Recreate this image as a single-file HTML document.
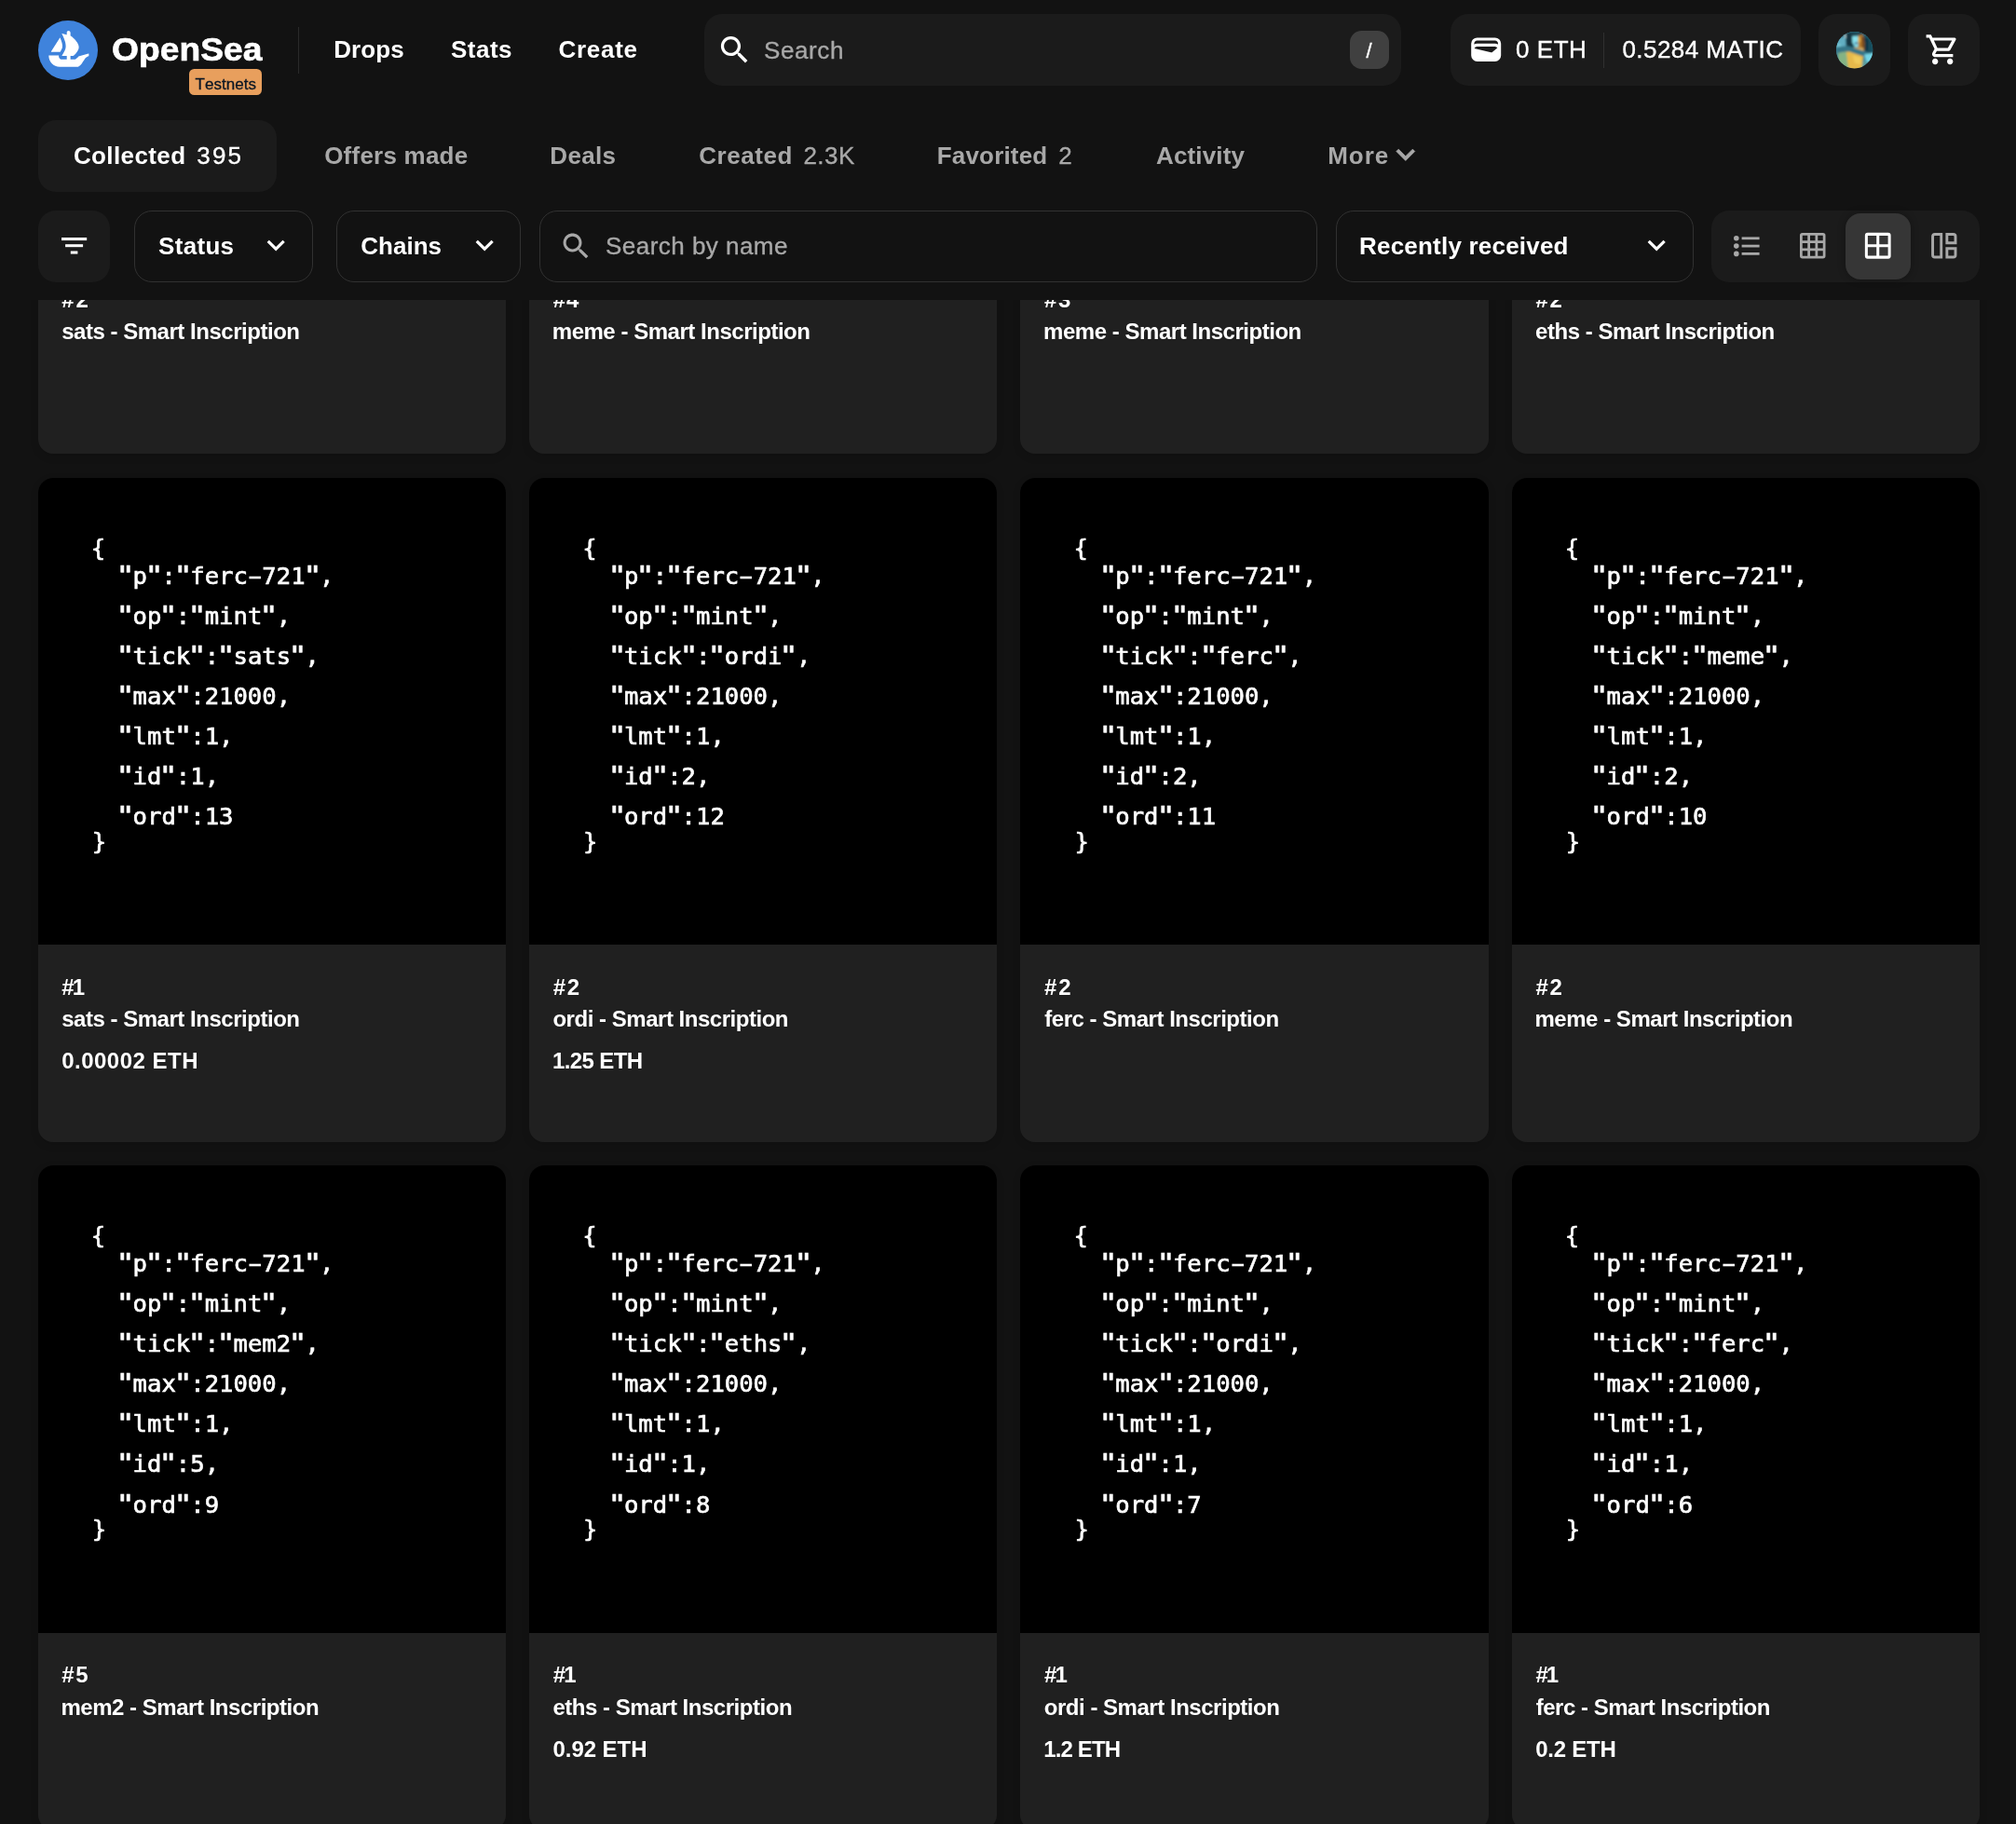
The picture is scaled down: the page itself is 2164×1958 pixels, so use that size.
<!DOCTYPE html><html lang="en"><head><meta charset="utf-8"><title>OpenSea</title><style>
*{box-sizing:border-box;margin:0;padding:0}
html,body{width:2164px;height:1958px;background:#121212;overflow:hidden}
body{position:relative;font-family:"Liberation Sans",sans-serif;font-kerning:none;font-variant-ligatures:none;-webkit-font-smoothing:antialiased}
.t{position:absolute;white-space:nowrap;line-height:1;display:block}
.ls{font-family:"Liberation Sans",sans-serif}
.mo{font-family:"DejaVu Sans Mono","Liberation Mono",monospace}
.cd{-webkit-text-stroke:0.65px #fff}
.q{display:inline-block;font-style:normal;transform-origin:50% 10.5px;transform:translate(-0.3px,-0.5px) scale(1.33,1.06)}
.hy{display:inline-block;font-style:normal;transform:scaleX(1.75)}
.b{font-weight:700}.r{font-weight:400}
.ic{position:absolute;display:block;overflow:visible}
.bx{position:absolute}
.card{position:absolute;width:501.75px;height:713px;border-radius:16px;background:#202020;overflow:hidden;box-shadow:0 3px 10px rgba(0,0,0,.12)}
.card .img{position:absolute;left:0;top:0;width:100%;height:501px;background:#000}
#root{position:absolute;left:0;top:0;width:2164px;height:1958px;overflow:hidden;will-change:transform}
#hdr{position:absolute;left:0;top:0;width:2164px;height:322px;background:#121212;z-index:5}
.fill{background:#1b1b1b}
.line{border:1.6px solid #313131}
</style></head><body>
<div id="root">
<div class="card" style="left:41px;top:-226px;width:502px"><div class="img"></div><span class="t ls b " style="left:25.34px;top:535.58px;font-size:24px;letter-spacing:1.776px;color:#fff;">#2</span><span class="t ls b " style="left:25.16px;top:569.88px;font-size:24px;letter-spacing:-0.474px;color:#fff;">sats - Smart Inscription</span></div>
<div class="card" style="left:568px;top:-226px;width:502px"><div class="img"></div><span class="t ls b " style="left:25.69px;top:535.58px;font-size:24px;letter-spacing:0.944px;color:#fff;">#4</span><span class="t ls b " style="left:24.77px;top:569.88px;font-size:24px;letter-spacing:-0.474px;color:#fff;">meme - Smart Inscription</span></div>
<div class="card" style="left:1095px;top:-226px;width:503px"><div class="img"></div><span class="t ls b " style="left:26.04px;top:535.58px;font-size:24px;letter-spacing:1.682px;color:#fff;">#3</span><span class="t ls b " style="left:25.12px;top:569.88px;font-size:24px;letter-spacing:-0.474px;color:#fff;">meme - Smart Inscription</span></div>
<div class="card" style="left:1623px;top:-226px;width:502px"><div class="img"></div><span class="t ls b " style="left:25.39px;top:535.58px;font-size:24px;letter-spacing:1.776px;color:#fff;">#2</span><span class="t ls b " style="left:25.11px;top:569.88px;font-size:24px;letter-spacing:-0.474px;color:#fff;">eths - Smart Inscription</span></div>
<div class="card" style="left:41px;top:513px;width:502px"><div class="img"></div><span class="t mo r cd" style="left:56.79px;top:63.14px;font-size:25.6px;letter-spacing:0.000px;color:#fff;">{</span><span class="t mo r cd" style="left:86.15px;top:92.74px;font-size:25.6px;letter-spacing:0.000px;color:#fff;"><i class="q">&quot;</i>p<i class="q">&quot;</i>:<i class="q">&quot;</i>ferc<i class="hy">-</i>721<i class="q">&quot;</i>,</span><span class="t mo r cd" style="left:86.15px;top:135.84px;font-size:25.6px;letter-spacing:0.000px;color:#fff;"><i class="q">&quot;</i>op<i class="q">&quot;</i>:<i class="q">&quot;</i>mint<i class="q">&quot;</i>,</span><span class="t mo r cd" style="left:86.15px;top:178.94px;font-size:25.6px;letter-spacing:0.000px;color:#fff;"><i class="q">&quot;</i>tick<i class="q">&quot;</i>:<i class="q">&quot;</i>sats<i class="q">&quot;</i>,</span><span class="t mo r cd" style="left:86.15px;top:222.04px;font-size:25.6px;letter-spacing:0.000px;color:#fff;"><i class="q">&quot;</i>max<i class="q">&quot;</i>:21000,</span><span class="t mo r cd" style="left:86.15px;top:265.14px;font-size:25.6px;letter-spacing:0.000px;color:#fff;"><i class="q">&quot;</i>lmt<i class="q">&quot;</i>:1,</span><span class="t mo r cd" style="left:86.15px;top:308.24px;font-size:25.6px;letter-spacing:0.000px;color:#fff;"><i class="q">&quot;</i>id<i class="q">&quot;</i>:1,</span><span class="t mo r cd" style="left:86.15px;top:351.34px;font-size:25.6px;letter-spacing:0.000px;color:#fff;"><i class="q">&quot;</i>ord<i class="q">&quot;</i>:13</span><span class="t mo r cd" style="left:57.69px;top:378.14px;font-size:25.6px;letter-spacing:0.000px;color:#fff;">}</span><span class="t ls b " style="left:25.34px;top:534.78px;font-size:24px;letter-spacing:-1.867px;color:#fff;">#1</span><span class="t ls b " style="left:25.16px;top:569.08px;font-size:24px;letter-spacing:-0.474px;color:#fff;">sats - Smart Inscription</span><span class="t ls b " style="left:25.15px;top:613.78px;font-size:24px;letter-spacing:0.494px;color:#fff;">0.00002 ETH</span></div>
<div class="card" style="left:568px;top:513px;width:502px"><div class="img"></div><span class="t mo r cd" style="left:57.14px;top:63.14px;font-size:25.6px;letter-spacing:0.000px;color:#fff;">{</span><span class="t mo r cd" style="left:86.50px;top:92.74px;font-size:25.6px;letter-spacing:0.000px;color:#fff;"><i class="q">&quot;</i>p<i class="q">&quot;</i>:<i class="q">&quot;</i>ferc<i class="hy">-</i>721<i class="q">&quot;</i>,</span><span class="t mo r cd" style="left:86.50px;top:135.84px;font-size:25.6px;letter-spacing:0.000px;color:#fff;"><i class="q">&quot;</i>op<i class="q">&quot;</i>:<i class="q">&quot;</i>mint<i class="q">&quot;</i>,</span><span class="t mo r cd" style="left:86.50px;top:178.94px;font-size:25.6px;letter-spacing:0.000px;color:#fff;"><i class="q">&quot;</i>tick<i class="q">&quot;</i>:<i class="q">&quot;</i>ordi<i class="q">&quot;</i>,</span><span class="t mo r cd" style="left:86.50px;top:222.04px;font-size:25.6px;letter-spacing:0.000px;color:#fff;"><i class="q">&quot;</i>max<i class="q">&quot;</i>:21000,</span><span class="t mo r cd" style="left:86.50px;top:265.14px;font-size:25.6px;letter-spacing:0.000px;color:#fff;"><i class="q">&quot;</i>lmt<i class="q">&quot;</i>:1,</span><span class="t mo r cd" style="left:86.50px;top:308.24px;font-size:25.6px;letter-spacing:0.000px;color:#fff;"><i class="q">&quot;</i>id<i class="q">&quot;</i>:2,</span><span class="t mo r cd" style="left:86.50px;top:351.34px;font-size:25.6px;letter-spacing:0.000px;color:#fff;"><i class="q">&quot;</i>ord<i class="q">&quot;</i>:12</span><span class="t mo r cd" style="left:58.04px;top:378.14px;font-size:25.6px;letter-spacing:0.000px;color:#fff;">}</span><span class="t ls b " style="left:25.69px;top:534.78px;font-size:24px;letter-spacing:1.776px;color:#fff;">#2</span><span class="t ls b " style="left:25.41px;top:569.08px;font-size:24px;letter-spacing:-0.474px;color:#fff;">ordi - Smart Inscription</span><span class="t ls b " style="left:24.94px;top:613.78px;font-size:24px;letter-spacing:-0.593px;color:#fff;">1.25 ETH</span></div>
<div class="card" style="left:1095px;top:513px;width:503px"><div class="img"></div><span class="t mo r cd" style="left:57.49px;top:63.14px;font-size:25.6px;letter-spacing:0.000px;color:#fff;">{</span><span class="t mo r cd" style="left:86.85px;top:92.74px;font-size:25.6px;letter-spacing:0.000px;color:#fff;"><i class="q">&quot;</i>p<i class="q">&quot;</i>:<i class="q">&quot;</i>ferc<i class="hy">-</i>721<i class="q">&quot;</i>,</span><span class="t mo r cd" style="left:86.85px;top:135.84px;font-size:25.6px;letter-spacing:0.000px;color:#fff;"><i class="q">&quot;</i>op<i class="q">&quot;</i>:<i class="q">&quot;</i>mint<i class="q">&quot;</i>,</span><span class="t mo r cd" style="left:86.85px;top:178.94px;font-size:25.6px;letter-spacing:0.000px;color:#fff;"><i class="q">&quot;</i>tick<i class="q">&quot;</i>:<i class="q">&quot;</i>ferc<i class="q">&quot;</i>,</span><span class="t mo r cd" style="left:86.85px;top:222.04px;font-size:25.6px;letter-spacing:0.000px;color:#fff;"><i class="q">&quot;</i>max<i class="q">&quot;</i>:21000,</span><span class="t mo r cd" style="left:86.85px;top:265.14px;font-size:25.6px;letter-spacing:0.000px;color:#fff;"><i class="q">&quot;</i>lmt<i class="q">&quot;</i>:1,</span><span class="t mo r cd" style="left:86.85px;top:308.24px;font-size:25.6px;letter-spacing:0.000px;color:#fff;"><i class="q">&quot;</i>id<i class="q">&quot;</i>:2,</span><span class="t mo r cd" style="left:86.85px;top:351.34px;font-size:25.6px;letter-spacing:0.000px;color:#fff;"><i class="q">&quot;</i>ord<i class="q">&quot;</i>:11</span><span class="t mo r cd" style="left:58.39px;top:378.14px;font-size:25.6px;letter-spacing:0.000px;color:#fff;">}</span><span class="t ls b " style="left:26.04px;top:534.78px;font-size:24px;letter-spacing:1.776px;color:#fff;">#2</span><span class="t ls b " style="left:26.29px;top:569.08px;font-size:24px;letter-spacing:-0.474px;color:#fff;">ferc - Smart Inscription</span></div>
<div class="card" style="left:1623px;top:513px;width:502px"><div class="img"></div><span class="t mo r cd" style="left:56.84px;top:63.14px;font-size:25.6px;letter-spacing:0.000px;color:#fff;">{</span><span class="t mo r cd" style="left:86.20px;top:92.74px;font-size:25.6px;letter-spacing:0.000px;color:#fff;"><i class="q">&quot;</i>p<i class="q">&quot;</i>:<i class="q">&quot;</i>ferc<i class="hy">-</i>721<i class="q">&quot;</i>,</span><span class="t mo r cd" style="left:86.20px;top:135.84px;font-size:25.6px;letter-spacing:0.000px;color:#fff;"><i class="q">&quot;</i>op<i class="q">&quot;</i>:<i class="q">&quot;</i>mint<i class="q">&quot;</i>,</span><span class="t mo r cd" style="left:86.20px;top:178.94px;font-size:25.6px;letter-spacing:0.000px;color:#fff;"><i class="q">&quot;</i>tick<i class="q">&quot;</i>:<i class="q">&quot;</i>meme<i class="q">&quot;</i>,</span><span class="t mo r cd" style="left:86.20px;top:222.04px;font-size:25.6px;letter-spacing:0.000px;color:#fff;"><i class="q">&quot;</i>max<i class="q">&quot;</i>:21000,</span><span class="t mo r cd" style="left:86.20px;top:265.14px;font-size:25.6px;letter-spacing:0.000px;color:#fff;"><i class="q">&quot;</i>lmt<i class="q">&quot;</i>:1,</span><span class="t mo r cd" style="left:86.20px;top:308.24px;font-size:25.6px;letter-spacing:0.000px;color:#fff;"><i class="q">&quot;</i>id<i class="q">&quot;</i>:2,</span><span class="t mo r cd" style="left:86.20px;top:351.34px;font-size:25.6px;letter-spacing:0.000px;color:#fff;"><i class="q">&quot;</i>ord<i class="q">&quot;</i>:10</span><span class="t mo r cd" style="left:57.74px;top:378.14px;font-size:25.6px;letter-spacing:0.000px;color:#fff;">}</span><span class="t ls b " style="left:25.39px;top:534.78px;font-size:24px;letter-spacing:1.776px;color:#fff;">#2</span><span class="t ls b " style="left:24.47px;top:569.08px;font-size:24px;letter-spacing:-0.474px;color:#fff;">meme - Smart Inscription</span></div>
<div class="card" style="left:41px;top:1251px;width:502px"><div class="img" style="height:502px"></div><span class="t mo r cd" style="left:56.79px;top:63.34px;font-size:25.6px;letter-spacing:0.000px;color:#fff;">{</span><span class="t mo r cd" style="left:86.15px;top:92.94px;font-size:25.6px;letter-spacing:0.000px;color:#fff;"><i class="q">&quot;</i>p<i class="q">&quot;</i>:<i class="q">&quot;</i>ferc<i class="hy">-</i>721<i class="q">&quot;</i>,</span><span class="t mo r cd" style="left:86.15px;top:136.04px;font-size:25.6px;letter-spacing:0.000px;color:#fff;"><i class="q">&quot;</i>op<i class="q">&quot;</i>:<i class="q">&quot;</i>mint<i class="q">&quot;</i>,</span><span class="t mo r cd" style="left:86.15px;top:179.14px;font-size:25.6px;letter-spacing:0.000px;color:#fff;"><i class="q">&quot;</i>tick<i class="q">&quot;</i>:<i class="q">&quot;</i>mem2<i class="q">&quot;</i>,</span><span class="t mo r cd" style="left:86.15px;top:222.24px;font-size:25.6px;letter-spacing:0.000px;color:#fff;"><i class="q">&quot;</i>max<i class="q">&quot;</i>:21000,</span><span class="t mo r cd" style="left:86.15px;top:265.34px;font-size:25.6px;letter-spacing:0.000px;color:#fff;"><i class="q">&quot;</i>lmt<i class="q">&quot;</i>:1,</span><span class="t mo r cd" style="left:86.15px;top:308.44px;font-size:25.6px;letter-spacing:0.000px;color:#fff;"><i class="q">&quot;</i>id<i class="q">&quot;</i>:5,</span><span class="t mo r cd" style="left:86.15px;top:351.54px;font-size:25.6px;letter-spacing:0.000px;color:#fff;"><i class="q">&quot;</i>ord<i class="q">&quot;</i>:9</span><span class="t mo r cd" style="left:57.69px;top:378.34px;font-size:25.6px;letter-spacing:0.000px;color:#fff;">}</span><span class="t ls b " style="left:25.34px;top:534.98px;font-size:24px;letter-spacing:1.483px;color:#fff;">#5</span><span class="t ls b " style="left:24.42px;top:570.38px;font-size:24px;letter-spacing:-0.474px;color:#fff;">mem2 - Smart Inscription</span></div>
<div class="card" style="left:568px;top:1251px;width:502px"><div class="img" style="height:502px"></div><span class="t mo r cd" style="left:57.14px;top:63.34px;font-size:25.6px;letter-spacing:0.000px;color:#fff;">{</span><span class="t mo r cd" style="left:86.50px;top:92.94px;font-size:25.6px;letter-spacing:0.000px;color:#fff;"><i class="q">&quot;</i>p<i class="q">&quot;</i>:<i class="q">&quot;</i>ferc<i class="hy">-</i>721<i class="q">&quot;</i>,</span><span class="t mo r cd" style="left:86.50px;top:136.04px;font-size:25.6px;letter-spacing:0.000px;color:#fff;"><i class="q">&quot;</i>op<i class="q">&quot;</i>:<i class="q">&quot;</i>mint<i class="q">&quot;</i>,</span><span class="t mo r cd" style="left:86.50px;top:179.14px;font-size:25.6px;letter-spacing:0.000px;color:#fff;"><i class="q">&quot;</i>tick<i class="q">&quot;</i>:<i class="q">&quot;</i>eths<i class="q">&quot;</i>,</span><span class="t mo r cd" style="left:86.50px;top:222.24px;font-size:25.6px;letter-spacing:0.000px;color:#fff;"><i class="q">&quot;</i>max<i class="q">&quot;</i>:21000,</span><span class="t mo r cd" style="left:86.50px;top:265.34px;font-size:25.6px;letter-spacing:0.000px;color:#fff;"><i class="q">&quot;</i>lmt<i class="q">&quot;</i>:1,</span><span class="t mo r cd" style="left:86.50px;top:308.44px;font-size:25.6px;letter-spacing:0.000px;color:#fff;"><i class="q">&quot;</i>id<i class="q">&quot;</i>:1,</span><span class="t mo r cd" style="left:86.50px;top:351.54px;font-size:25.6px;letter-spacing:0.000px;color:#fff;"><i class="q">&quot;</i>ord<i class="q">&quot;</i>:8</span><span class="t mo r cd" style="left:58.04px;top:378.34px;font-size:25.6px;letter-spacing:0.000px;color:#fff;">}</span><span class="t ls b " style="left:25.69px;top:534.98px;font-size:24px;letter-spacing:-1.867px;color:#fff;">#1</span><span class="t ls b " style="left:25.41px;top:570.38px;font-size:24px;letter-spacing:-0.474px;color:#fff;">eths - Smart Inscription</span><span class="t ls b " style="left:25.50px;top:615.08px;font-size:24px;letter-spacing:-0.059px;color:#fff;">0.92 ETH</span></div>
<div class="card" style="left:1095px;top:1251px;width:503px"><div class="img" style="height:502px"></div><span class="t mo r cd" style="left:57.49px;top:63.34px;font-size:25.6px;letter-spacing:0.000px;color:#fff;">{</span><span class="t mo r cd" style="left:86.85px;top:92.94px;font-size:25.6px;letter-spacing:0.000px;color:#fff;"><i class="q">&quot;</i>p<i class="q">&quot;</i>:<i class="q">&quot;</i>ferc<i class="hy">-</i>721<i class="q">&quot;</i>,</span><span class="t mo r cd" style="left:86.85px;top:136.04px;font-size:25.6px;letter-spacing:0.000px;color:#fff;"><i class="q">&quot;</i>op<i class="q">&quot;</i>:<i class="q">&quot;</i>mint<i class="q">&quot;</i>,</span><span class="t mo r cd" style="left:86.85px;top:179.14px;font-size:25.6px;letter-spacing:0.000px;color:#fff;"><i class="q">&quot;</i>tick<i class="q">&quot;</i>:<i class="q">&quot;</i>ordi<i class="q">&quot;</i>,</span><span class="t mo r cd" style="left:86.85px;top:222.24px;font-size:25.6px;letter-spacing:0.000px;color:#fff;"><i class="q">&quot;</i>max<i class="q">&quot;</i>:21000,</span><span class="t mo r cd" style="left:86.85px;top:265.34px;font-size:25.6px;letter-spacing:0.000px;color:#fff;"><i class="q">&quot;</i>lmt<i class="q">&quot;</i>:1,</span><span class="t mo r cd" style="left:86.85px;top:308.44px;font-size:25.6px;letter-spacing:0.000px;color:#fff;"><i class="q">&quot;</i>id<i class="q">&quot;</i>:1,</span><span class="t mo r cd" style="left:86.85px;top:351.54px;font-size:25.6px;letter-spacing:0.000px;color:#fff;"><i class="q">&quot;</i>ord<i class="q">&quot;</i>:7</span><span class="t mo r cd" style="left:58.39px;top:378.34px;font-size:25.6px;letter-spacing:0.000px;color:#fff;">}</span><span class="t ls b " style="left:26.04px;top:534.98px;font-size:24px;letter-spacing:-1.867px;color:#fff;">#1</span><span class="t ls b " style="left:25.76px;top:570.38px;font-size:24px;letter-spacing:-0.474px;color:#fff;">ordi - Smart Inscription</span><span class="t ls b " style="left:25.29px;top:615.08px;font-size:24px;letter-spacing:-0.884px;color:#fff;">1.2 ETH</span></div>
<div class="card" style="left:1623px;top:1251px;width:502px"><div class="img" style="height:502px"></div><span class="t mo r cd" style="left:56.84px;top:63.34px;font-size:25.6px;letter-spacing:0.000px;color:#fff;">{</span><span class="t mo r cd" style="left:86.20px;top:92.94px;font-size:25.6px;letter-spacing:0.000px;color:#fff;"><i class="q">&quot;</i>p<i class="q">&quot;</i>:<i class="q">&quot;</i>ferc<i class="hy">-</i>721<i class="q">&quot;</i>,</span><span class="t mo r cd" style="left:86.20px;top:136.04px;font-size:25.6px;letter-spacing:0.000px;color:#fff;"><i class="q">&quot;</i>op<i class="q">&quot;</i>:<i class="q">&quot;</i>mint<i class="q">&quot;</i>,</span><span class="t mo r cd" style="left:86.20px;top:179.14px;font-size:25.6px;letter-spacing:0.000px;color:#fff;"><i class="q">&quot;</i>tick<i class="q">&quot;</i>:<i class="q">&quot;</i>ferc<i class="q">&quot;</i>,</span><span class="t mo r cd" style="left:86.20px;top:222.24px;font-size:25.6px;letter-spacing:0.000px;color:#fff;"><i class="q">&quot;</i>max<i class="q">&quot;</i>:21000,</span><span class="t mo r cd" style="left:86.20px;top:265.34px;font-size:25.6px;letter-spacing:0.000px;color:#fff;"><i class="q">&quot;</i>lmt<i class="q">&quot;</i>:1,</span><span class="t mo r cd" style="left:86.20px;top:308.44px;font-size:25.6px;letter-spacing:0.000px;color:#fff;"><i class="q">&quot;</i>id<i class="q">&quot;</i>:1,</span><span class="t mo r cd" style="left:86.20px;top:351.54px;font-size:25.6px;letter-spacing:0.000px;color:#fff;"><i class="q">&quot;</i>ord<i class="q">&quot;</i>:6</span><span class="t mo r cd" style="left:57.74px;top:378.34px;font-size:25.6px;letter-spacing:0.000px;color:#fff;">}</span><span class="t ls b " style="left:25.39px;top:534.98px;font-size:24px;letter-spacing:-1.867px;color:#fff;">#1</span><span class="t ls b " style="left:25.64px;top:570.38px;font-size:24px;letter-spacing:-0.474px;color:#fff;">ferc - Smart Inscription</span><span class="t ls b " style="left:25.20px;top:615.08px;font-size:24px;letter-spacing:-0.244px;color:#fff;">0.2 ETH</span></div>
<div id="hdr">
<svg class="ic" style="left:41.2px;top:21.8px" width="64" height="64" viewBox="0 0 90 90"><circle cx="45" cy="45" r="45" fill="#3f83dc"/><g transform="translate(44.4 45) scale(1.09) translate(-45 -45)"><path fill="#fff" d="M22.2011 46.512L22.3953 46.2069L34.1016 27.8939C34.2726 27.6257 34.6749 27.6535 34.8043 27.9447C36.76 32.3277 38.4475 37.7786 37.6569 41.1721C37.3194 42.5683 36.3948 44.4593 35.3545 46.2069C35.2204 46.4612 35.0725 46.7109 34.9153 46.9513C34.8413 47.0622 34.7165 47.127 34.5824 47.127H22.5432C22.2196 47.127 22.0301 46.7756 22.2011 46.512Z"/><path fill="#fff" d="M74.38 49.9149V52.8137C74.38 52.9801 74.2783 53.1281 74.1304 53.1928C73.2242 53.5812 70.1219 55.0052 68.832 56.799C65.5402 61.3807 63.0251 67.932 57.4031 67.932H33.949C25.6362 67.932 18.9 61.1727 18.9 52.8322V52.564C18.9 52.3421 19.0803 52.1618 19.3022 52.1618H32.377C32.6359 52.1618 32.8255 52.4022 32.8024 52.6565C32.7099 53.5072 32.8671 54.3764 33.2693 55.167C34.0461 56.7435 35.655 57.7283 37.3934 57.7283H43.866V52.675H37.4673C37.1391 52.675 36.9449 52.2959 37.1345 52.0277C37.2038 51.9214 37.2824 51.8104 37.3656 51.6856C37.9713 50.8257 38.8358 49.4895 39.6958 47.9684C40.2829 46.9421 40.8516 45.8463 41.3093 44.746C41.4018 44.5472 41.4758 44.3438 41.5497 44.1449C41.6746 43.7936 41.804 43.4653 41.8965 43.1371C41.989 42.8597 42.0629 42.5684 42.1369 42.2956C42.3542 41.3617 42.4467 40.3723 42.4467 39.3459C42.4467 38.9437 42.4282 38.523 42.3912 38.1207C42.3727 37.6815 42.3172 37.2423 42.2617 36.8031C42.2247 36.4147 42.1554 36.031 42.0814 35.6288C41.989 35.0417 41.8595 34.4592 41.7115 33.872L41.6607 33.6501C41.5497 33.2479 41.4573 32.8641 41.3278 32.4619C40.9626 31.1998 40.5418 29.9701 40.098 28.8188C39.9362 28.3611 39.7512 27.9219 39.5663 27.4827C39.2935 26.8216 39.0161 26.2206 38.7619 25.6519C38.6324 25.393 38.5214 25.1572 38.4105 24.9168C38.2857 24.644 38.1562 24.3712 38.0268 24.1123C37.9343 23.9135 37.8279 23.7286 37.754 23.5437L36.9634 22.0827C36.8524 21.8839 37.0374 21.6481 37.2546 21.7082L42.2016 23.0489H42.2155C42.2247 23.0489 42.2294 23.0536 42.234 23.0536L42.8859 23.2339L43.6025 23.4373L43.866 23.5113V20.5709C43.866 19.1516 45.0034 18 46.4089 18C47.1116 18 47.7496 18.2866 48.2073 18.7536C48.665 19.2206 48.9517 19.8586 48.9517 20.5709V24.9353L49.4787 25.0832C49.5204 25.0971 49.562 25.1156 49.599 25.1433C49.7284 25.2404 49.9133 25.3837 50.1491 25.5594C50.3341 25.7073 50.5329 25.8877 50.7733 26.0726C51.2495 26.4563 51.8181 26.951 52.4423 27.5197C52.6087 27.663 52.7706 27.811 52.9185 27.9589C53.7229 28.7079 54.6245 29.5863 55.4844 30.5572C55.7248 30.8299 55.9606 31.1073 56.201 31.3986C56.4414 31.6944 56.6957 31.9857 56.9176 32.277C57.2089 32.6654 57.5232 33.0676 57.796 33.4883C57.9255 33.6871 58.0734 33.8905 58.1982 34.0893C58.5496 34.621 58.8593 35.1711 59.1552 35.7212C59.28 35.9755 59.4095 36.2529 59.5205 36.5257C59.8487 37.2608 60.1076 38.0098 60.274 38.7588C60.3249 38.9206 60.3619 39.0963 60.3804 39.2535V39.2904C60.4359 39.5124 60.4544 39.7482 60.4729 39.9886C60.5468 40.756 60.5098 41.5235 60.3434 42.2956C60.274 42.6239 60.1816 42.9336 60.0706 43.2619C59.9596 43.5763 59.8487 43.9045 59.7054 44.2143C59.428 44.8569 59.0997 45.4996 58.7113 46.1006C58.5865 46.3225 58.4386 46.5583 58.2906 46.7802C58.1288 47.016 57.9624 47.2379 57.8144 47.4552C57.611 47.7326 57.3937 48.0239 57.1718 48.2828C56.973 48.5556 56.7696 48.8284 56.5477 49.0688C56.2379 49.434 55.9421 49.7808 55.6324 50.1137C55.4474 50.3309 55.2486 50.5529 55.0452 50.7517C54.8464 50.9736 54.643 51.1724 54.4581 51.3573C54.1483 51.6671 53.8894 51.9075 53.6721 52.1063L53.1635 52.5733C53.0896 52.638 52.9925 52.675 52.8908 52.675H48.9517V57.7283H53.9079C55.0175 57.7283 56.0716 57.3353 56.9222 56.6141C57.2135 56.3598 58.4848 55.2594 59.9874 53.5997C60.0382 53.5442 60.103 53.5026 60.1769 53.4841L73.8668 49.5265C74.1211 49.4525 74.38 49.6467 74.38 49.9149Z"/></g></svg>
<span class="t ls b" style="left:119.5px;top:36.65px;font-size:33px;letter-spacing:0;color:#fff;transform-origin:0 27.93px;transform:scale(1.128,1.037);-webkit-text-stroke:0.6px #fff">OpenSea</span>
<div class="bx " style="left:203px;top:74px;width:78.00px;height:28.00px;border-radius:5.5px;background:#e89f5d"></div>
<div class="bx " style="left:319.6px;top:28.5px;width:1.60px;height:50.50px;border-radius:0px;background:#2a2a2a"></div>
<div class="bx fill" style="left:756px;top:15px;width:747.50px;height:77.00px;border-radius:19px;"></div>
<svg class="ic" style="left:768.86px;top:33.86px" width="39.12" height="39.12" viewBox="0 0 24 24" fill="#fff"><path d="M15.5 14h-.79l-.28-.27C15.41 12.59 16 11.11 16 9.5 16 5.91 13.09 3 9.5 3S3 5.91 3 9.5 5.91 16 9.5 16c1.61 0 3.09-.59 4.23-1.57l.27.28v.79l5 4.99L20.49 19l-4.99-5zm-6 0C7.01 14 5 11.99 5 9.5S7.01 5 9.5 5 14 7.01 14 9.5 11.99 14 9.5 14z"/></svg>
<div class="bx " style="left:1449px;top:32.6px;width:42.10px;height:41.50px;border-radius:12.5px;background:#404040"></div>
<div class="bx fill" style="left:1557px;top:15px;width:376.00px;height:77.00px;border-radius:19px;"></div>
<svg class="ic" style="left:1575.80px;top:33.60px" width="38.4" height="38.4" viewBox="0 -960 960 960" fill="#fff"><path d="M240-160q-66 0-113-47T80-320v-320q0-66 47-113t113-47h480q66 0 113 47t47 113v320q0 66-47 113t-113 47H240Zm0-480h480q22 0 42 5t38 16v-21q0-33-23.500-56.500T720-720H240q-33 0-56.500 23.500T160-640v21q18-11 38-16t42-5Zm-74 130 445 108q9 2 18 0t17-8l139-116q-11-15-28-24.500t-37-9.500H240q-26 0-45.500 13.500T166-510Z"/></svg>
<div class="bx " style="left:1720.5px;top:34.5px;width:1.60px;height:38.50px;border-radius:0px;background:#303030"></div>
<div class="bx fill" style="left:1952px;top:15px;width:76.80px;height:77.00px;border-radius:19px;"></div>
<svg class="ic" style="left:1970.8px;top:33.7px" width="39.4" height="39.4" viewBox="0 0 40 40"><defs><clipPath id="av"><circle cx="20" cy="20" r="20"/></clipPath><filter id="bl" x="-20%" y="-20%" width="140%" height="140%"><feGaussianBlur stdDeviation="0.9"/></filter></defs><g clip-path="url(#av)"><rect width="40" height="40" fill="#3f8596"/><g filter="url(#bl)"><rect x="-2" y="-2" width="44" height="19" fill="#2b6878"/><path d="M-1 8 L10 5 L11 18 L-1 19Z" fill="#62aec2"/><path d="M-1 14 L5 13 L5 20 L-1 21Z" fill="#74c4d4"/><path d="M9 2.500 L12.500 2 L12.500 7 L9.500 7Z" fill="#cfe6e8"/><path d="M10.500 2 L19 0 L20 4 L18 17 L11 16.500Z" fill="#123642"/><path d="M16 1 L29 0 L29 4.500 L17 5Z" fill="#1d4753"/><path d="M30 3 L41 8 L41 26 L31 23Z" fill="#194f5f"/><path d="M30.500 6 L35 9 L35 21 L31 21Z" fill="#0e3644"/><path d="M17.400 5 L24.400 4.500 L24.400 16.500 L21 17 L17.600 12Z" fill="#86e2ee"/><path d="M20 12 L23 11.500 L23 13.500 L20.500 13.500Z" fill="#3b4a78"/><path d="M24 4 L29 3 L31 12 L30.500 21 L24 17Z" fill="#b57b2b"/><path d="M27.500 5 L30.500 6 L31 20 L28 19Z" fill="#7a4a1c"/><path d="M24 6 L26.500 6 L26.500 11 L24 12Z" fill="#e0a845"/><path d="M19.500 17 L29.500 17.500 L30 22 L19 21Z" fill="#cfa860"/><path d="M-2 17 L12 15.500 L42 25 L42 32 L10 21.500 L-2 24Z" fill="#357688"/><path d="M30.500 25 L41 23 L41 32 L33 33.500Z" fill="#74d6e6"/><path d="M6 22.500 L14 21.500 L29.500 27 L29 42 L8 42Z" fill="#e6b94b"/><path d="M18 26 L27 28 L27 36 L20 34Z" fill="#f0cb5c"/><path d="M2 23 L11 22 L13.500 42 L2 36Z" fill="#84b384"/><path d="M28.500 31 L34 33 L28 42Z" fill="#5f9f9c"/></g></g></svg>
<div class="bx fill" style="left:2048px;top:15px;width:76.60px;height:77.00px;border-radius:19px;"></div>
<svg class="ic" style="left:2066.40px;top:33.80px" width="38.4" height="38.4" viewBox="0 0 24 24" fill="#fff"><path d="M15.55 13c.75 0 1.410-.41 1.750-1.030l3.580-6.490c.37-.66-.11-1.480-.87-1.480H5.210l-.94-2H1v2h2l3.600 7.590-1.350 2.440C4.520 15.370 5.480 17 7 17h12v-2H7l1.100-2h7.450zM6.160 6h12.150l-2.760 5H8.530L6.160 6zM7 18c-1.100 0-1.990.9-1.990 2S5.900 22 7 22s2-.9 2-2-.9-2-2-2zm10 0c-1.100 0-1.990.9-1.990 2s.89 2 1.990 2 2-.9 2-2-.9-2-2-2z"/></svg>
<div class="bx fill" style="left:41.2px;top:129px;width:255.80px;height:76.80px;border-radius:19px;"></div>
<svg class="ic" style="left:1489.35px;top:145.83px" width="39.599999999999994" height="39.599999999999994" viewBox="0 0 24 24" fill="#a8a8a8" stroke="#a8a8a8" stroke-width="0.5"><path d="M16.59 8.59 12 13.17 7.41 8.59 6 10l6 6 6-6z"/></svg>
<div class="bx fill" style="left:41.2px;top:225.8px;width:76.80px;height:77.20px;border-radius:19px;"></div>
<svg class="ic" style="left:66px;top:255px" width="27.2" height="17.8" viewBox="0 0 27.2 17.8" fill="#fff"><rect x="0" y="0" width="27.2" height="3.1"/><rect x="4.1" y="7.2" width="19" height="3"/><rect x="9.8" y="14.500" width="7.6" height="3.100"/></svg>
<div class="bx line" style="left:144.2px;top:225.8px;width:191.60px;height:77.20px;border-radius:19px;"></div>
<svg class="ic" style="left:277.15px;top:244.26px" width="38.400000000000006" height="38.400000000000006" viewBox="0 0 24 24" fill="#fff"><path d="M16.59 8.59 12 13.17 7.41 8.59 6 10l6 6 6-6z"/></svg>
<div class="bx line" style="left:361.2px;top:225.8px;width:198.30px;height:77.20px;border-radius:19px;"></div>
<svg class="ic" style="left:501.00px;top:244.26px" width="38.400000000000006" height="38.400000000000006" viewBox="0 0 24 24" fill="#fff"><path d="M16.59 8.59 12 13.17 7.41 8.59 6 10l6 6 6-6z"/></svg>
<div class="bx line" style="left:579.2px;top:225.8px;width:835.30px;height:77.20px;border-radius:19px;"></div>
<svg class="ic" style="left:599.91px;top:246.01px" width="36.72" height="36.72" viewBox="0 0 24 24" fill="#a8a8a8"><path d="M15.5 14h-.79l-.28-.27C15.41 12.59 16 11.11 16 9.5 16 5.91 13.09 3 9.5 3S3 5.91 3 9.5 5.91 16 9.5 16c1.61 0 3.09-.59 4.23-1.57l.27.28v.79l5 4.99L20.49 19l-4.99-5zm-6 0C7.01 14 5 11.99 5 9.5S7.01 5 9.5 5 14 7.01 14 9.5 11.99 14 9.5 14z"/></svg>
<div class="bx line" style="left:1434.2px;top:225.8px;width:383.80px;height:77.20px;border-radius:19px;"></div>
<svg class="ic" style="left:1759.15px;top:244.26px" width="38.400000000000006" height="38.400000000000006" viewBox="0 0 24 24" fill="#fff"><path d="M16.59 8.59 12 13.17 7.41 8.59 6 10l6 6 6-6z"/></svg>
<div class="bx fill" style="left:1837px;top:225.8px;width:288.00px;height:77.20px;border-radius:19px;"></div>
<div class="bx " style="left:1981px;top:229.2px;width:70.00px;height:70.40px;border-radius:16px;background:#363636;box-shadow:0 0 8px rgba(0,0,0,.3)"></div>
<svg class="ic" style="left:1861.4px;top:252.8px" width="27.6" height="22.2" viewBox="0 0 27.6 22.2" fill="#a8a8a8"><circle cx="2.8" cy="2.8" r="2.8"/><circle cx="2.8" cy="11.1" r="2.8"/><circle cx="2.8" cy="19.4" r="2.8"/><rect x="8.6" y="1.4" width="19" height="2.8"/><rect x="8.6" y="9.7" width="19" height="2.8"/><rect x="8.6" y="18" width="19" height="2.8"/></svg>
<svg class="ic" style="left:1931.8px;top:250px" width="27.5" height="27.5" viewBox="0 0 20 20" fill="none" stroke="#a8a8a8" stroke-width="2"><rect x="1" y="1" width="18" height="18" rx="1"/><path d="M7 1v18M13 1v18M1 7h18M1 13h18"/></svg>
<svg class="ic" style="left:2002.2px;top:250px" width="27.5" height="27.5" viewBox="0 0 20 20" fill="none" stroke="#fff" stroke-width="2.2"><rect x="1" y="1" width="18" height="18" rx="1"/><path d="M10 1v18M1 10h18"/></svg>
<svg class="ic" style="left:2072.7px;top:250px" width="27.6" height="27.5" viewBox="0 0 18 18" fill="none" stroke="#a8a8a8" stroke-width="1.9"><path d="M7 1H2.5Q1 1 1 2.500V15.500Q1 17 2.500 17H7Z"/><path d="M11 1H15.500Q17 1 17 2.500V7H11Z"/><path d="M11 11H17V15.500Q17 17 15.500 17H11Z"/></svg>
<span class="t ls b " style="left:358.26px;top:39.99px;font-size:26px;letter-spacing:0.097px;color:#fff;">Drops</span>
<span class="t ls b " style="left:484.05px;top:39.99px;font-size:26px;letter-spacing:0.484px;color:#fff;">Stats</span>
<span class="t ls b " style="left:599.53px;top:39.99px;font-size:26px;letter-spacing:0.724px;color:#fff;">Create</span>
<span class="t ls r " style="left:820.07px;top:40.79px;font-size:26px;letter-spacing:0.598px;color:#a8a8a8;-webkit-text-stroke:0.35px #a8a8a8;">Search</span>
<span class="t ls r " style="left:1466.40px;top:43.78px;font-size:22px;letter-spacing:0.000px;color:#fff;-webkit-text-stroke:0.35px #fff;">/</span>
<span class="t ls r " style="left:1626.98px;top:39.99px;font-size:26px;letter-spacing:0.551px;color:#fff;-webkit-text-stroke:0.35px #fff;">0 ETH</span>
<span class="t ls r " style="left:1741.48px;top:39.99px;font-size:26px;letter-spacing:0.443px;color:#fff;-webkit-text-stroke:0.35px #fff;">0.5284 MATIC</span>
<span class="t ls r " style="left:209.62px;top:81.71px;font-size:17px;letter-spacing:0.015px;color:#0a1624;-webkit-text-stroke:0.3px #0a1624">Testnets</span>
<span class="t ls b " style="left:78.93px;top:153.79px;font-size:26px;letter-spacing:0.394px;color:#fff;">Collected</span>
<span class="t ls r " style="left:211.31px;top:153.79px;font-size:26px;letter-spacing:2.201px;color:#fff;-webkit-text-stroke:0.35px #fff;">395</span>
<span class="t ls b " style="left:348.18px;top:153.79px;font-size:26px;letter-spacing:0.223px;color:#a8a8a8;">Offers made</span>
<span class="t ls b " style="left:590.26px;top:153.79px;font-size:26px;letter-spacing:0.356px;color:#a8a8a8;">Deals</span>
<span class="t ls b " style="left:750.18px;top:153.79px;font-size:26px;letter-spacing:0.578px;color:#a8a8a8;">Created</span>
<span class="t ls r " style="left:862.44px;top:153.79px;font-size:26px;letter-spacing:0.455px;color:#a8a8a8;-webkit-text-stroke:0.35px #a8a8a8;">2.3K</span>
<span class="t ls b " style="left:1005.76px;top:153.79px;font-size:26px;letter-spacing:0.178px;color:#a8a8a8;">Favorited</span>
<span class="t ls r " style="left:1136.19px;top:153.79px;font-size:26px;letter-spacing:0.000px;color:#a8a8a8;-webkit-text-stroke:0.35px #a8a8a8;">2</span>
<span class="t ls b " style="left:1241.10px;top:153.79px;font-size:26px;letter-spacing:0.124px;color:#a8a8a8;">Activity</span>
<span class="t ls b " style="left:1425.26px;top:153.79px;font-size:26px;letter-spacing:0.920px;color:#a8a8a8;">More</span>
<span class="t ls b " style="left:170.00px;top:250.99px;font-size:26px;letter-spacing:0.321px;color:#fff;">Status</span>
<span class="t ls b " style="left:387.18px;top:250.99px;font-size:26px;letter-spacing:0.040px;color:#fff;">Chains</span>
<span class="t ls r " style="left:650.07px;top:250.99px;font-size:26px;letter-spacing:0.462px;color:#a8a8a8;-webkit-text-stroke:0.35px #a8a8a8;">Search by name</span>
<span class="t ls b " style="left:1459.01px;top:250.99px;font-size:26px;letter-spacing:0.208px;color:#fff;">Recently received</span>
</div>
</div>
</body></html>
